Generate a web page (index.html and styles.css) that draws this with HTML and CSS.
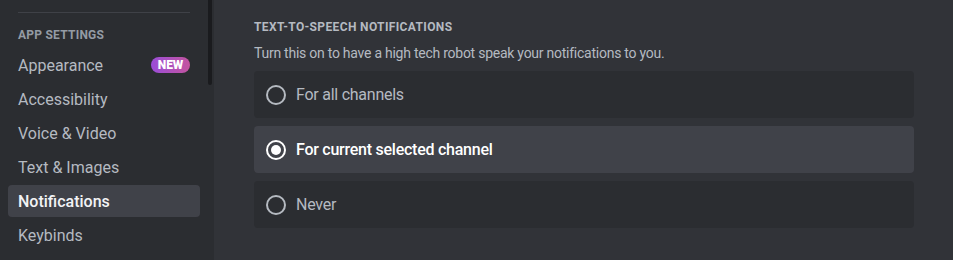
FILE: index.html
```html
<!DOCTYPE html>
<html lang="en">
<head>
  <meta charset="UTF-8">
  <title>Notifications</title>
  <link rel="stylesheet" href="styles.css">
</head>
<body>
  <div class="layout">
    <!-- Settings sidebar -->
    <nav class="sidebar">
      <div class="scrollbar"></div>
      <div class="separator"></div>
      <div class="side-header">App Settings</div>
      <div class="side-item">Appearance <span class="badge">NEW</span></div>
      <div class="side-item">Accessibility</div>
      <div class="side-item">Voice &amp; Video</div>
      <div class="side-item">Text &amp; Images</div>
      <div class="side-item selected">Notifications</div>
      <div class="side-item">Keybinds</div>
    </nav>

    <!-- Content -->
    <main class="content">
      <h5 class="title">Text-to-speech notifications</h5>
      <p class="desc">Turn this on to have a high tech robot speak your notifications to you.</p>
      <div class="radio-group">
        <div class="radio">
          <span class="circle"></span>
          <span class="label">For all channels</span>
        </div>
        <div class="radio checked">
          <span class="circle"></span>
          <span class="label">For current selected channel</span>
        </div>
        <div class="radio">
          <span class="circle"></span>
          <span class="label">Never</span>
        </div>
      </div>
    </main>
  </div>
</body>
</html>
```

FILE: styles.css
```css
/* Discord-like dark settings page */
body {
  margin: 0;
  font-family: Roboto, "Noto Sans", sans-serif;
  background-color: #313338;
  color: #b5bac1;
  height: 260px;
  overflow: hidden;
}

.layout {
  display: flex;
  height: 260px;
}

.sidebar {
  position: relative;
  width: 214px;
  flex-shrink: 0;
  box-sizing: border-box;
  background-color: #2b2d31;
  padding: 12px 14px 0 8px;
}

.scrollbar {
  position: absolute;
  top: 0;
  left: 208px;
  width: 4px;
  height: 85px;
  background-color: #1a1b1e;
  border-radius: 0 0 2px 2px;
}

.separator {
  height: 1px;
  margin: 0 10px 14px;
  background-color: #3f4147;
}

.side-header {
  padding: 0 10px;
  font-size: 12px;
  line-height: 16px;
  font-weight: 700;
  text-transform: uppercase;
  letter-spacing: 0.02em;
  color: #949ba4;
  margin-bottom: 6px;
}

.side-item {
  display: flex;
  align-items: center;
  justify-content: space-between;
  height: 32px;
  padding: 0 10px;
  margin-bottom: 2px;
  border-radius: 4px;
  font-size: 16px;
  font-weight: 400;
  color: #b5bac1;
}

.side-item.selected {
  background-color: #404249;
  color: #f2f3f5;
  font-weight: 500;
}

.badge {
  width: 39px;
  height: 16px;
  line-height: 16px;
  border-radius: 8px;
  text-align: center;
  font-size: 12px;
  font-weight: 900;
  color: #fff;
  background: linear-gradient(90deg, #9a4dd8, #c4549f);
}

.content {
  flex: 1;
  padding: 19px 39px 0 40px;
}

.title {
  margin: 0 0 8px;
  font-size: 12px;
  line-height: 16px;
  font-weight: 700;
  text-transform: uppercase;
  letter-spacing: 0.03em;
  color: #b5bac1;
}

.desc {
  margin: 0 0 8px;
  font-size: 14px;
  line-height: 20px;
  letter-spacing: -0.25px;
  color: #b5bac1;
}

.radio-group {
  display: flex;
  flex-direction: column;
  gap: 8px;
}

.radio {
  display: flex;
  align-items: center;
  gap: 10px;
  height: 47px;
  padding: 0 12px;
  border-radius: 4px;
  background-color: #2b2d31;
  font-size: 16px;
  font-weight: 400;
  letter-spacing: -0.25px;
  color: #b5bac1;
}

.radio.checked {
  background-color: #404249;
  color: #fff;
  font-weight: 500;
}

.circle {
  width: 20px;
  height: 20px;
  box-sizing: border-box;
  border: 2px solid #b5bac1;
  border-radius: 50%;
  display: flex;
  align-items: center;
  justify-content: center;
}

.radio.checked .circle {
  border-color: #fff;
}

.radio.checked .circle::after {
  content: "";
  width: 10px;
  height: 10px;
  border-radius: 50%;
  background-color: #fff;
}
```
